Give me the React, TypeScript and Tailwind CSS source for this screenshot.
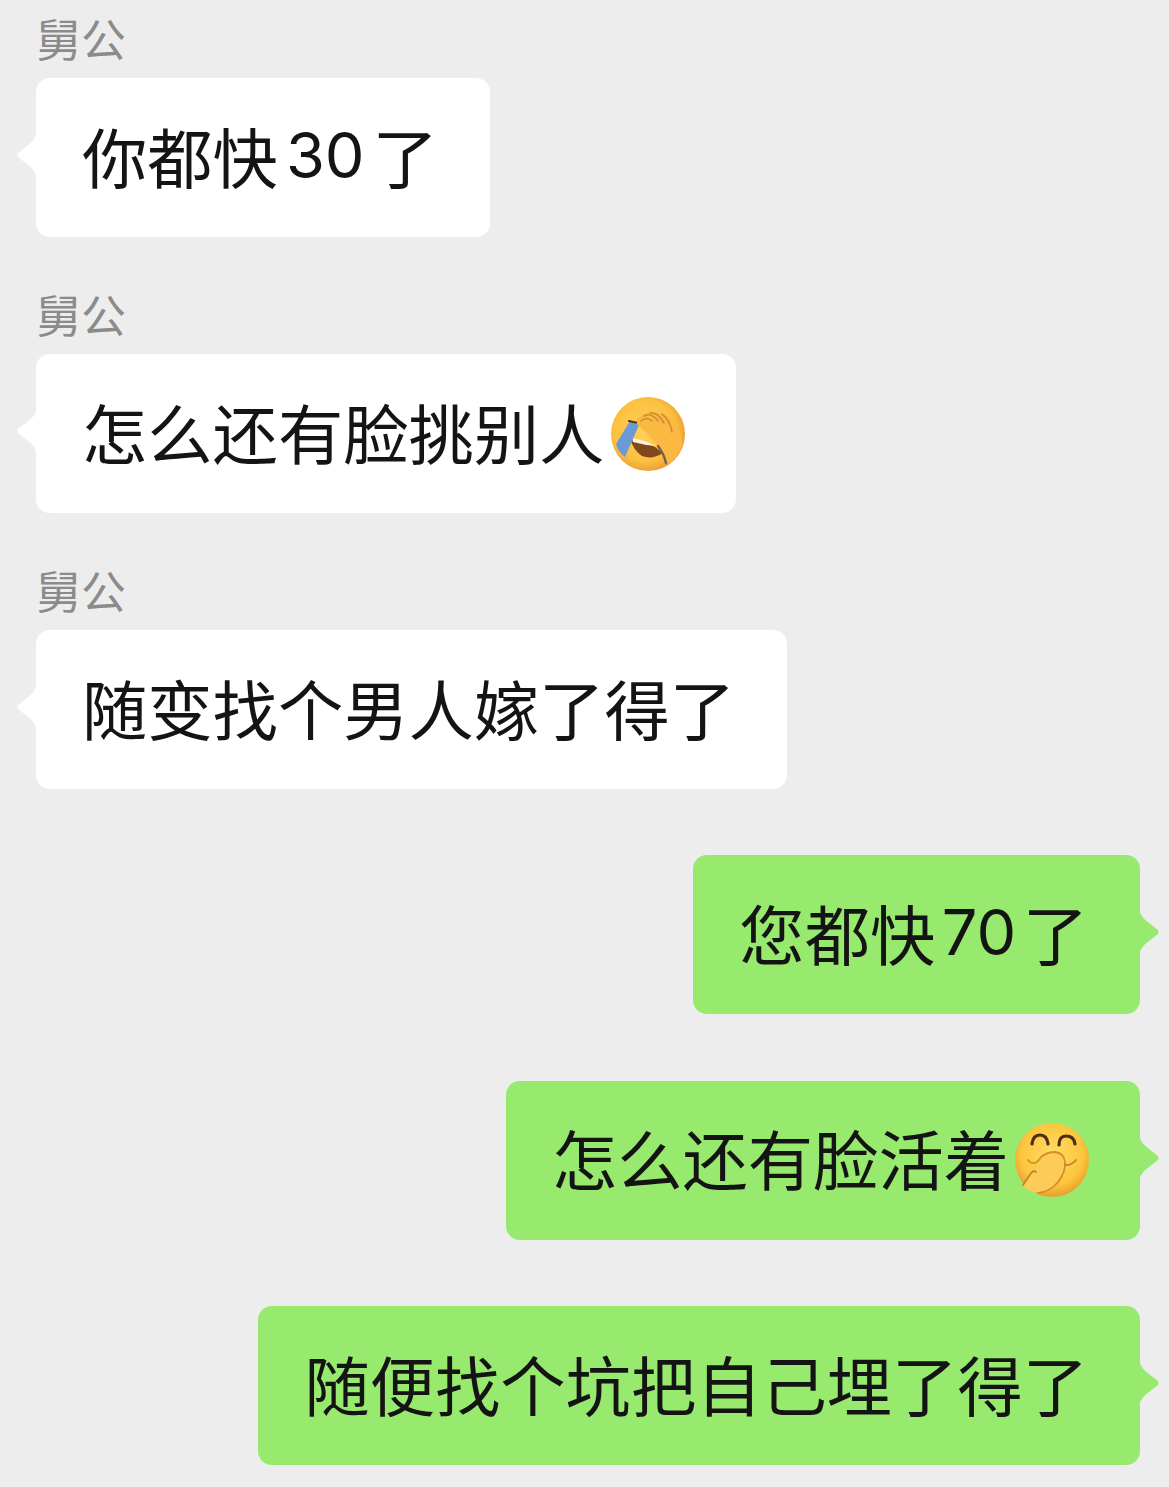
import type { ReactNode } from "react";

const FacepalmEmoji = () => (
  <svg viewBox="0 0 80 80" className="-mb-[6px] -mr-[4px] ml-[3.6px] h-[80px] w-[80px] shrink-0">
    <defs>
      <radialGradient id="faceA" cx="45%" cy="45%" r="58%">
        <stop offset="0%" stopColor="#ffd258" />
        <stop offset="72%" stopColor="#fcc040" />
        <stop offset="100%" stopColor="#e89a30" />
      </radialGradient>
    </defs>
    <circle cx="40" cy="40" r="37" fill="url(#faceA)" />
    {/* mouth */}
    <path d="M22 44 Q40 46 55 59 Q44 66 34 62 Q25 56 22 44Z" fill="#80491c" />
    <path d="M24 44 Q37 46 48 52 Q36 51 25 48Z" fill="#fff1e0" />
    {/* tear stream */}
    <path d="M22 27 L31 31 L17 63 Q10 58 8 50Z" fill="#6b9bd6" />
    <path d="M21 27 L30 29" stroke="#54381c" strokeWidth="2.2" strokeLinecap="round" />
    {/* hand */}
    <path d="M29 26 Q36 18 44 18 Q58 18 66 28 Q75 40 74 52 Q70 64 60 70 L57 69 Q56 58 49 50 Q38 38 29 30Z" fill="#fbb944" />
    <path d="M33 27 Q38 22 44 27 M36 22 Q43 18 50 27 M42 19 Q50 18 56 29 M54 20 Q62 26 64 38" fill="none" stroke="#cf8d32" strokeWidth="1.6" strokeLinecap="round" />
    <path d="M50 52 Q56 60 58 69" fill="none" stroke="#7a6048" strokeWidth="2.4" strokeLinecap="round" />
  </svg>
);

const SmirkEmoji = () => (
  <svg viewBox="0 0 80 80" className="-mb-[6px] -mr-[4px] ml-[3px] h-[80px] w-[80px] shrink-0">
    <defs>
      <radialGradient id="faceB" cx="50%" cy="42%" r="58%">
        <stop offset="0%" stopColor="#ffdc62" />
        <stop offset="72%" stopColor="#fcc63f" />
        <stop offset="100%" stopColor="#e99f2c" />
      </radialGradient>
    </defs>
    <circle cx="40" cy="40" r="37" fill="url(#faceB)" />
    {/* eyes */}
    <path d="M20 24 Q21 15 28 15 Q35 15 36 24" fill="none" stroke="#4c2f14" strokeWidth="3.2" strokeLinecap="round" />
    <path d="M47 25 Q47 16 54 16 Q62 16 63 24" fill="none" stroke="#4c2f14" strokeWidth="3.2" strokeLinecap="round" />
    {/* hand */}
    <path d="M31 37 Q36 32 43 32 Q52 33 53 42 Q54 52 46 62 Q38 72 26 73 Q16 72 11 65 L19 53 Q24 46 31 37Z" fill="#fccb58" />
    <path d="M16 40 Q19 44 23 43 Q26 42 29 37 Q35 32 43 32 Q52 33 53 42 Q54 52 46 62 Q38 72 26 73" fill="none" stroke="#d48f2a" strokeWidth="1.8" strokeLinecap="round" />
    <path d="M53 45 Q59 46 64 40 M11 65 L19 53 M19 53 Q22 50 24 52" fill="none" stroke="#c5832a" strokeWidth="1.8" strokeLinecap="round" />
  </svg>
);

const Tail = ({ side, color }: { side: "left" | "right"; color: string }) => (
  <svg
    viewBox="0 0 20 48"
    fill={color}
    className={`absolute top-[53px] h-[48px] w-[20px] ${side === "left" ? "-left-[19px]" : "-right-[19px] -scale-x-100"}`}
  >
    <path d="M20 0 C19 8 14 12 10 15 L1 22 Q0 24 1 26 L10 33 C14 36 19 40 20 48Z" />
  </svg>
);

const Bubble = ({ mine, children }: { mine?: boolean; children: ReactNode }) => (
  <div
    className={`relative flex h-[159px] items-center rounded-[14px] pb-[6px] pl-[46px] pr-[52px] text-[65.3px] leading-none whitespace-nowrap text-[#141414] ${
      mine ? "bg-[#97ea6e]" : "bg-white"
    }`}
  >
    <Tail side={mine ? "right" : "left"} color={mine ? "#97ea6e" : "#ffffff"} />
    {children}
  </div>
);

const Digits = ({ tight, children }: { tight?: boolean; children: ReactNode }) => (
  <span className={`mt-[2px] font-['Inter',sans-serif] text-[63px] ${tight ? "mx-[6.5px]" : "mx-[8px]"}`}>{children}</span>
);

const Incoming = ({ children }: { children: ReactNode }) => (
  <div className="flex flex-col items-start gap-[15px]">
    <p className="text-[45px] leading-[50px] text-[#8b8b8b]">舅公</p>
    <Bubble>{children}</Bubble>
  </div>
);

const Outgoing = ({ children }: { children: ReactNode }) => (
  <div className="flex justify-end">
    <Bubble mine>{children}</Bubble>
  </div>
);

export default function App() {
  return (
    <div className="flex h-[1487px] w-[1169px] flex-col overflow-hidden bg-[#ededed] pl-[36px] pr-[29px] pt-[13px] font-['Noto_Sans_CJK_SC','Noto_Sans',sans-serif]">
      <div className="flex flex-col gap-[52px]">
        <Incoming>
          你都快<Digits>30</Digits>了
        </Incoming>
        <Incoming>
          怎么还有脸挑别人
          <FacepalmEmoji />
        </Incoming>
        <Incoming>随变找个男人嫁了得了</Incoming>
      </div>
      <div className="mt-[66px] flex flex-col gap-[66.5px]">
        <Outgoing>
          您都快<Digits tight>70</Digits>了
        </Outgoing>
        <Outgoing>
          怎么还有脸活着
          <SmirkEmoji />
        </Outgoing>
        <Outgoing>随便找个坑把自己埋了得了</Outgoing>
      </div>
    </div>
  );
}
